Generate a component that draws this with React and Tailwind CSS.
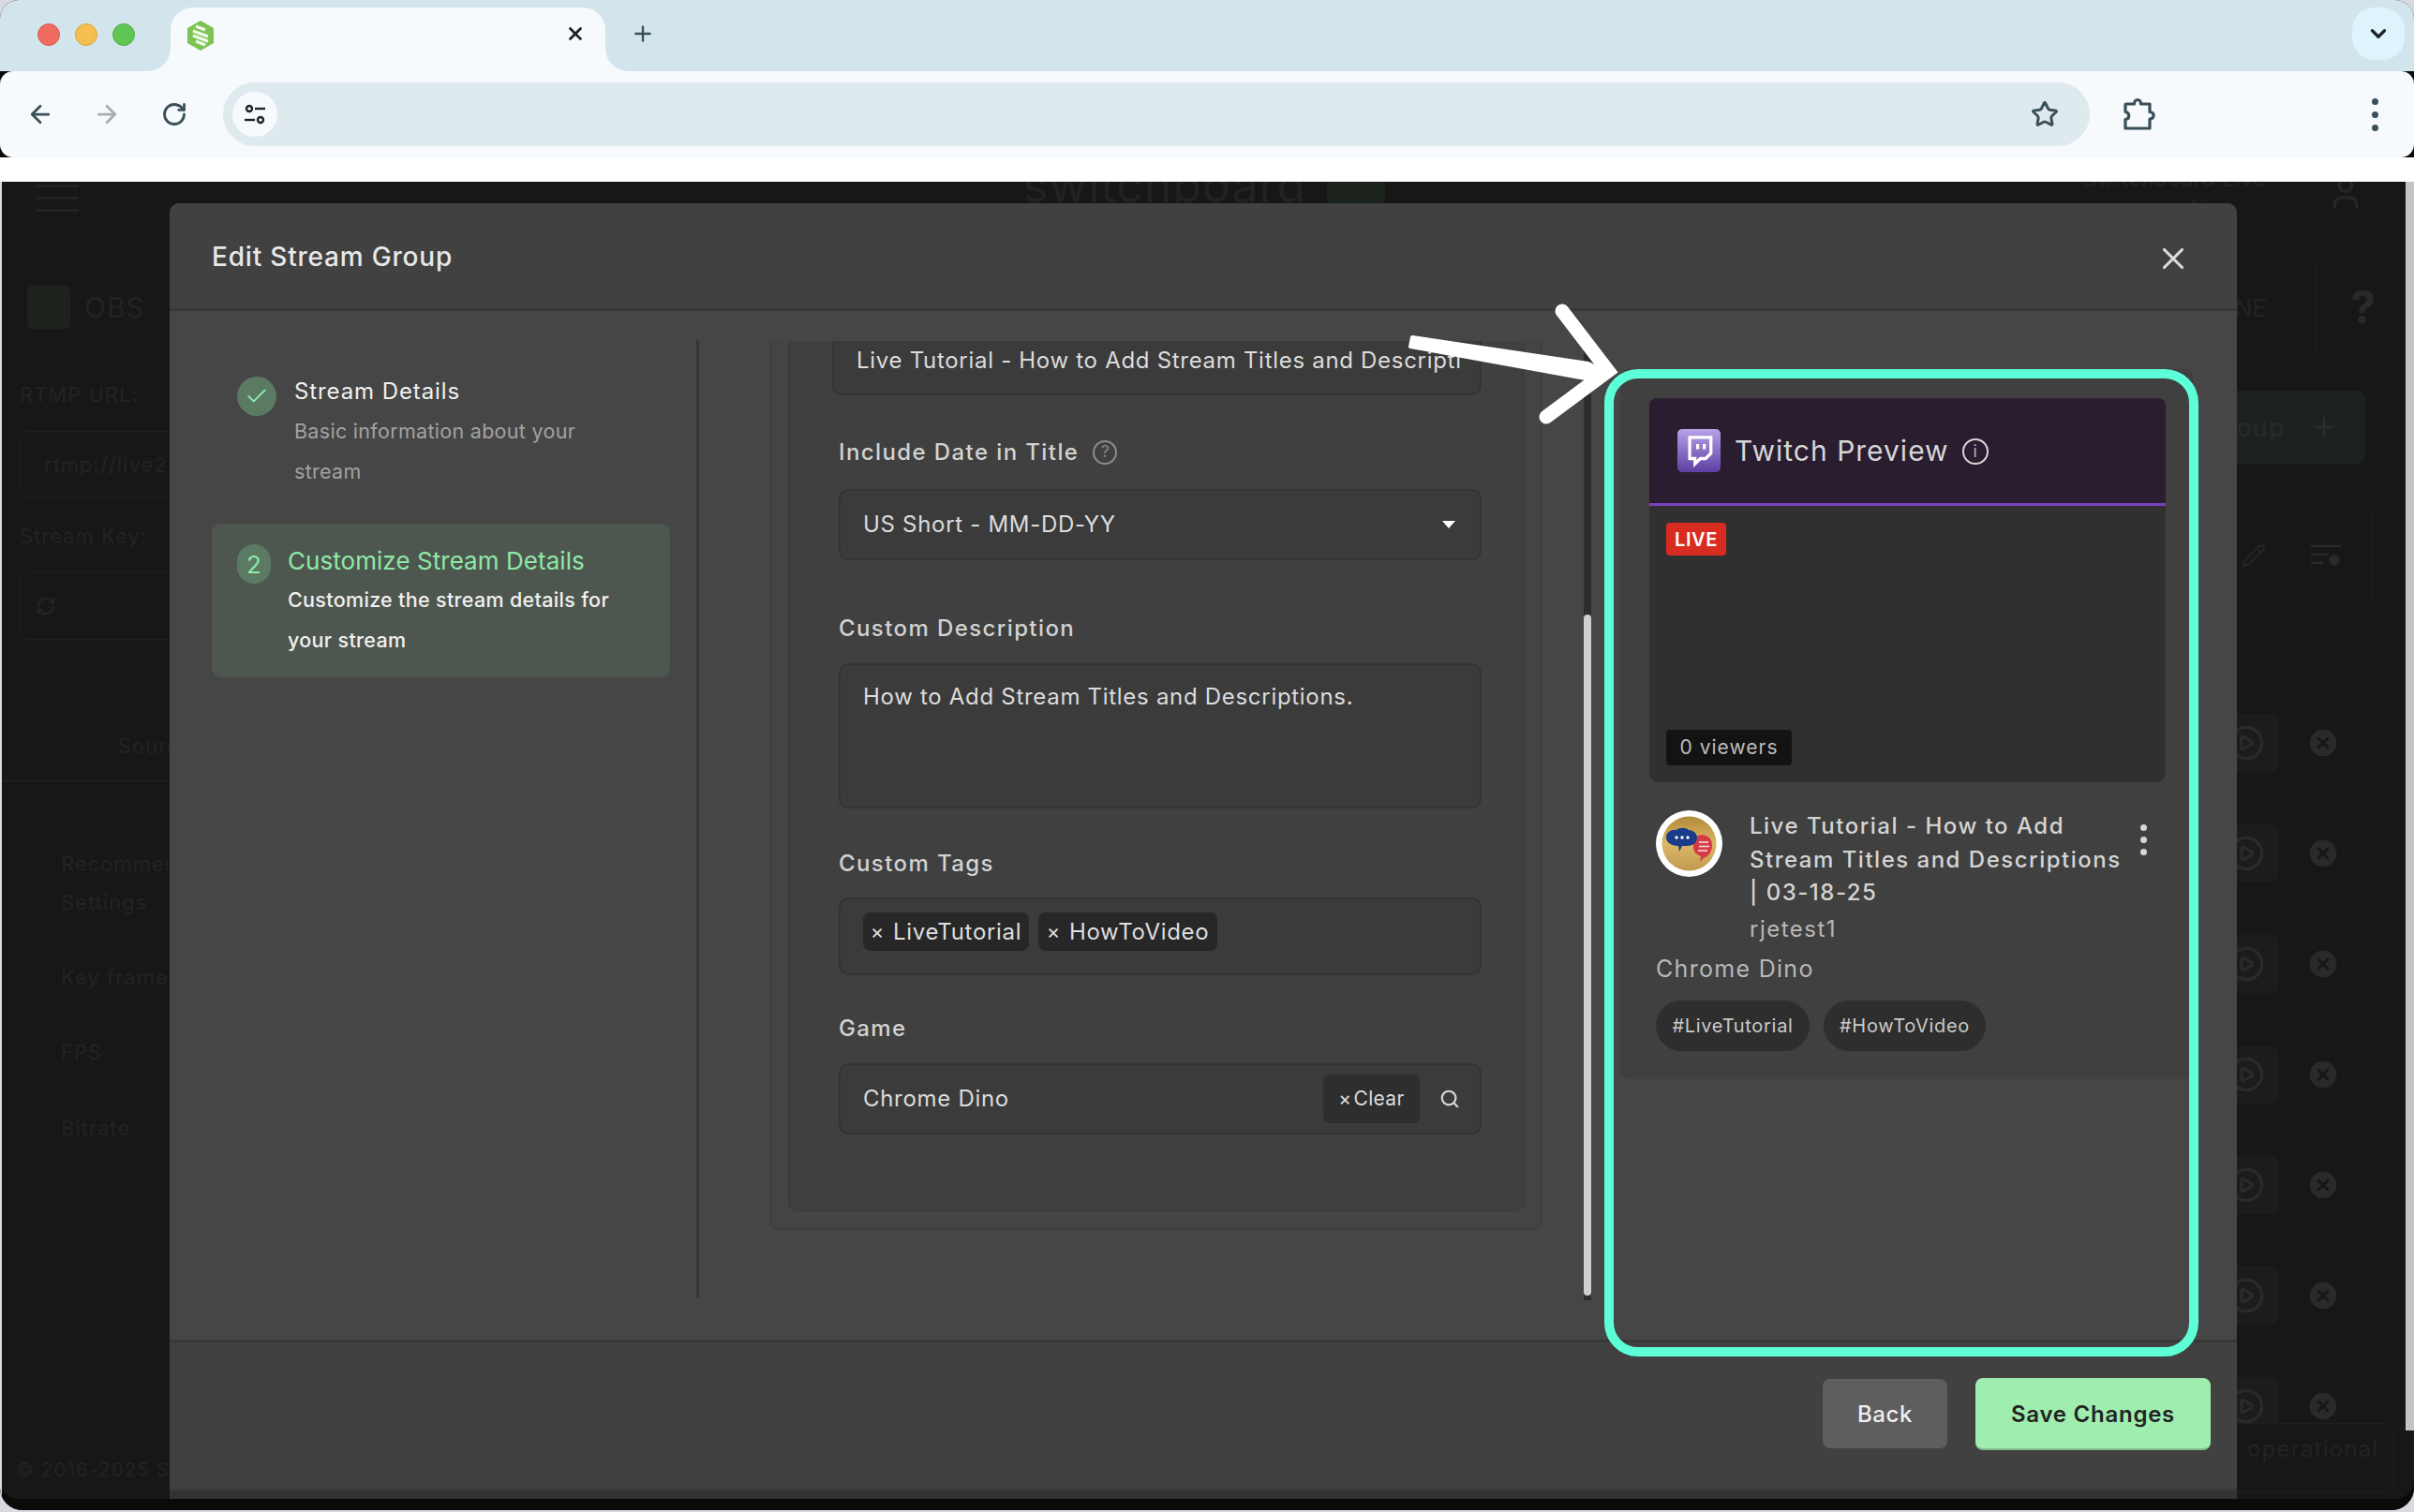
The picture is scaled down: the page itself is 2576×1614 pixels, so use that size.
import React from "react";
import { ArrowLeft, ArrowRight, RotateCw, Star, Plus, X, ChevronDown, Check, Search, RefreshCw, Pencil, CirclePlay, User, CircleX } from "lucide-react";

function Favicon() {
  return (
    <svg width="28" height="32" viewBox="0 0 28 32">
      <polygon points="14,0 28,8 28,24 14,32 0,24 0,8" fill="#7cc453" />
      <g stroke="#f4f9ee" strokeWidth="3.4" strokeLinecap="butt">
        <line x1="9" y1="6" x2="19" y2="10" />
        <line x1="6" y1="11" x2="22" y2="17" />
        <line x1="6" y1="16" x2="22" y2="22" />
        <line x1="9" y1="22" x2="19" y2="26" />
      </g>
    </svg>
  );
}

function TuneIcon() {
  return (
    <svg width="24" height="24" viewBox="0 0 24 24" fill="none" stroke="#1d2327" strokeWidth="2.4">
      <circle cx="6" cy="6" r="3" />
      <line x1="12" y1="6" x2="23" y2="6" />
      <line x1="1" y1="18" x2="12" y2="18" />
      <circle cx="18" cy="18" r="3" />
    </svg>
  );
}

function ExtensionIcon() {
  return (
    <svg width="34" height="36" viewBox="0 0 34 36" fill="none" stroke="#3b4f59" strokeWidth="3.2" strokeLinejoin="round">
      <path d="M4 7h7.5c0-6 7-6 7 0H28v8.5c5.5 0 5.500 7.500 0 7.500V33H2v-9.500c5-0.500 5-7.500 0-8V8c0-.6.600-1 2-1z" />
    </svg>
  );
}

function FilterGear() {
  return (
    <svg width="34" height="26" viewBox="0 0 34 26" fill="none" stroke="#2a2a2a" strokeWidth="2.4">
      <line x1="1" y1="3" x2="33" y2="3" />
      <line x1="1" y1="12" x2="20" y2="12" />
      <line x1="1" y1="21" x2="14" y2="21" />
      <circle cx="26" cy="18" r="4.500" fill="#2a2a2a" />
    </svg>
  );
}

function Kebab({ color, size = 6, gap = "gap-[8px]" }) {
  const cls = gap + " flex flex-col";
  return (
    <div className={cls}>
      {[0, 1, 2].map((i) => (
        <span key={i} className="block rounded-full" style={{ width: size, height: size, background: color }} />
      ))}
    </div>
  );
}

function BrowserChrome() {
  return (
    <>
      <div className="h-[76px] shrink-0 bg-[#d3e5ec] flex items-end relative">
        <div className="flex gap-[16px] pl-[40px] self-start pt-[25px]">
          <span className="w-[24px] h-[24px] rounded-full bg-[#ee6b60] border border-[#d85a50]" />
          <span className="w-[24px] h-[24px] rounded-full bg-[#f5bf4f] border border-[#dca53c]" />
          <span className="w-[24px] h-[24px] rounded-full bg-[#61c554] border border-[#4fae44]" />
        </div>
        <div className="relative ml-[38px] w-[464px] h-[68px] bg-[#f6fafd] rounded-t-[24px] flex items-center pl-[18px] pr-[21px] justify-between">
          <span className="absolute left-[-24px] bottom-0 w-[24px] h-[24px] bg-[radial-gradient(circle_at_0_0,#d3e5ec_23.5px,#f6fafd_24px)]" />
          <span className="absolute right-[-24px] bottom-0 w-[24px] h-[24px] bg-[radial-gradient(circle_at_100%_0,#d3e5ec_23.5px,#f6fafd_24px)]" />
          <div className="-mt-[8px]"><Favicon /></div>
          <X size={22} strokeWidth={3} color="#1d2327" className="-mt-[12px]" />
        </div>
        <Plus size={26} strokeWidth={2.2} color="#3b4f59" className="ml-[27px] mb-[27px]" />
        <div className="ml-auto mr-[10px] mb-[12px] w-[56px] h-[56px] rounded-[24px] bg-[#def4fc] flex items-center justify-center">
          <ChevronDown size={26} strokeWidth={3} color="#1d2327" />
        </div>
      </div>
      <div className="h-[92px] shrink-0 bg-[#f6fafd] rounded-[14px] flex items-center relative z-10">
        <ArrowLeft size={30} strokeWidth={2.2} color="#3b4f59" className="ml-[28px]" />
        <ArrowRight size={30} strokeWidth={2.2} color="#a7adb2" className="ml-[41px]" />
        <RotateCw size={28} strokeWidth={2.4} color="#3b4f59" className="ml-[43px]" />
        <div className="ml-[38px] w-[1992px] h-[68px] rounded-full bg-[#dfeaef] flex items-center pl-[10px] pr-[33px] justify-between">
          <div className="w-[48px] h-[48px] rounded-full bg-[#f6fafd] flex items-center justify-center"><TuneIcon /></div>
          <Star size={30} strokeWidth={2.4} color="#3b4f59" />
        </div>
        <div className="ml-[36px]"><ExtensionIcon /></div>
        <div className="ml-[231px]"><Kebab color="#3b4f59" size={7} gap="gap-[7px]" /></div>
      </div>
      <div className="h-[26px] shrink-0 bg-white" />
    </>
  );
}

function DimRow() {
  return (
    <div className="flex items-center h-[62px]">
      <div className="w-[55px] h-[62px] bg-[#1a1c1d] rounded-r-[8px] flex items-center">
        <CirclePlay size={40} strokeWidth={2} color="#2a2a2a" />
      </div>
      <CircleX size={38} fill="#2a2a2a" color="#171717" strokeWidth={2} className="ml-[28px]" />
    </div>
  );
}

const dimText = "text-[22px] leading-[30px] tracking-[1px]";

function DimBackground() {
  return (
    <div className="absolute inset-0 flex text-[#232323] overflow-hidden bg-[#171717] font-['Inter',sans-serif]">
      <div className="w-[700px] shrink-0 flex flex-col relative">
        <div className="flex flex-col gap-[10px] ml-[38px] mt-[3px] w-[46px]">
          <span className="h-[3px] bg-[#222]" /><span className="h-[3px] bg-[#222]" /><span className="h-[3px] bg-[#222]" />
        </div>
        <div className="flex items-center ml-[29px] mt-[79px] gap-[15px]">
          <span className="w-[46px] h-[46px] rounded-[6px] bg-[#1e221c]" />
          <span className="text-[30px] leading-[36px] tracking-[1px]">OBS</span>
        </div>
        <div className={"ml-[21px] mt-[55px] " + dimText}>RTMP URL:</div>
        <div className={"ml-[21px] mt-[24px] h-[71px] border border-[#1f1f1f] rounded-[8px] pl-[25px] flex items-center " + dimText}>rtmp://live2</div>
        <div className={"ml-[21px] mt-[26px] " + dimText}>Stream Key:</div>
        <div className="ml-[21px] mt-[24px] h-[72px] border border-[#1f1f1f] rounded-[8px] pl-[16px] flex items-center">
          <RefreshCw size={22} color="#262626" />
        </div>
        <div className={"ml-[126px] mt-[98px] " + dimText}>Source</div>
        <div className="mt-[22px] h-px bg-[#222]" />
        <div className="ml-[65px] mt-[68px] text-[22px] leading-[41px] tracking-[1px]">Recommended<br />Settings</div>
        <div className="ml-[65px] mt-[39px] text-[22px] leading-[41px] tracking-[1px]">Key frame</div>
        <div className="ml-[65px] mt-[39px] text-[22px] leading-[41px] tracking-[1px]">FPS</div>
        <div className="ml-[65px] mt-[40px] text-[22px] leading-[41px] tracking-[1px]">Bitrate</div>
        <div className="ml-[17px] mt-[330px] text-[20px] leading-[28px] tracking-[1.5px] whitespace-nowrap">© 2016-2025 Switchboard</div>
      </div>
      <div className="-mt-[16px] ml-[392px] flex items-center gap-[22px] text-[50px] leading-[52px] h-[40px] text-[#222] tracking-[1px]">
        <span>switchboard</span>
        <span className="w-[62px] h-[40px] bg-[#1c221c] rounded-[4px]" />
      </div>
      <div className="ml-auto w-[190px] shrink-0 flex flex-col items-start mr-[9px] relative">
        <div className="flex h-[60px] w-full justify-between pr-[44px] -mt-[18px]">
          <div className={"-ml-[154px] whitespace-nowrap " + dimText}>Switchboard Live<br /><span className="ml-[115px] leading-[26px]">Live</span></div>
          <User size={40} color="#262626" className="mt-[10px] shrink-0" />
        </div>
        <div className="flex items-center mt-[42px] w-full pl-[7px]">
          <span className="text-[26px]">NE</span>
          <span className="ml-[52px] w-px h-[100px] bg-[#1f1f1f]" />
          <span className="ml-[36px] text-[48px] font-bold text-[#2a2a2a]">?</span>
        </div>
        <div className="mt-[39px] w-[147px] h-[78px] bg-[#1c231e] rounded-r-[10px] flex items-center text-[26px] tracking-[1.5px] pl-[10px] text-[#2a2a2a]">
          oup<Plus size={32} color="#2c2c2c" className="ml-[26px]" />
        </div>
        <div className="mt-[50px] flex items-center pl-[15px]">
          <Pencil size={26} color="#262626" />
          <span className="ml-[47px]"><FilterGear /></span>
          <span className="ml-[31px] w-px h-[95px] bg-[#1f1f1f]" />
        </div>
        <div className="mt-[122px] flex flex-col gap-[56px]">
          {[0, 1, 2, 3, 4, 5, 6].map((i) => <DimRow key={i} />)}
        </div>
        <div className="-mt-[13px] w-[178px] h-[75px] border border-[#1f1f1f] rounded-[8px] bg-[#171717] pl-[20px] pt-[12px] text-[24px] leading-[30px] tracking-[1.2px] text-[#232323]">operational</div>
      </div>
    </div>
  );
}

function Label({ children, className }) {
  return (
    <div className={"h-[32px] flex items-center text-[24px] font-medium tracking-[1.4px] text-[#d2d2d2] " + className}>{children}</div>
  );
}

const box = "bg-[#3b3b3b] border-2 border-[#343434] rounded-[10px] ";
const val = "text-[24px] tracking-[0.7px] text-[#dcdcdc] ";

function MiddleColumn() {
  return (
    <div className="relative ml-[75px] w-[878px] h-[1024px] mt-[32px] overflow-hidden shrink-0">
      <div className="w-[825px] -mt-[18px] h-[967px] border-2 border-t-0 border-[#3f3f3f] rounded-[10px] bg-[#444] pl-[18px]">
        <div className="w-[786px] h-[947px] rounded-[10px] bg-[#404040] border-2 border-t-0 border-[#3c3c3c] pl-[52px] pr-[44px]">
          <div className={box + "h-[76px] -ml-[7px] flex items-center pl-[24px] pr-[21px] overflow-hidden whitespace-nowrap " + val}>
            <span className="block overflow-hidden w-full mt-[2px]">Live Tutorial - How to Add Stream Titles and Descriptions</span>
          </div>
          <Label className="mt-[45px] mb-[23px] gap-[15px]">
            Include Date in Title
            <span className="w-[26px] h-[26px] rounded-full border-2 border-[#8c8c8c] text-[#8c8c8c] text-[17px] font-normal flex items-center justify-center tracking-normal">?</span>
          </Label>
          <div className={box + "h-[76px] flex items-center justify-between pl-[24px] pr-[26px] " + val}>
            <span className="-mt-[1px]">US Short - MM-DD-YY</span>
            <span className="w-0 h-0 border-x-[7px] border-x-transparent border-t-[8px] border-t-white" />
          </div>
          <Label className="mt-[57px] mb-[21px]">Custom Description</Label>
          <div className={box + "h-[155px] pl-[24px] pt-[18px] leading-[32px] " + val}>How to Add Stream Titles and Descriptions.</div>
          <Label className="mt-[43px] mb-[20px]">Custom Tags</Label>
          <div className={box + "h-[83px] pl-[24px] pt-[14px] flex gap-[10px] items-start"}>
            <span className="h-[41px] w-[177px] bg-[#272727] rounded-[8px] flex items-center justify-center gap-[9px] text-[24px] tracking-[0.7px] text-[#dedede]"><span className="text-[22px]">×</span>LiveTutorial</span>
            <span className="h-[41px] w-[191px] bg-[#272727] rounded-[8px] flex items-center justify-center gap-[9px] text-[24px] tracking-[0.7px] text-[#dedede]"><span className="text-[22px]">×</span>HowToVideo</span>
          </div>
          <Label className="mt-[41px] mb-[21px]">Game</Label>
          <div className={box + "h-[76px] flex items-center pl-[24px] pr-[21px] " + val}>
            <span>Chrome Dino</span>
            <span className="ml-auto w-[103px] h-[52px] rounded-[6px] bg-[#2e2e2e] flex items-center justify-center text-[21px] tracking-[0.3px] gap-[2px]"><span>×</span>Clear</span>
            <Search size={22} strokeWidth={2.4} color="#d6d6d6" className="ml-[21px]" />
          </div>
        </div>
      </div>
      <div className="absolute left-[869px] top-0 w-[8px] h-full bg-[#2c2c2c]" />
      <div className="absolute left-[869px] top-[292px] w-[8px] h-[727px] bg-[#cfcfcf] rounded-full" />
    </div>
  );
}

function Avatar() {
  return (
    <svg width="71" height="71" viewBox="0 0 71 71" className="shrink-0">
      <defs>
        <linearGradient id="gold" x1="0" y1="0" x2="0" y2="1">
          <stop offset="0" stopColor="#b18a3a" />
          <stop offset=".5" stopColor="#dcb766" />
          <stop offset="1" stopColor="#c09a52" />
        </linearGradient>
      </defs>
      <circle cx="35.500" cy="35.500" r="35.500" fill="#fff" />
      <circle cx="35.500" cy="35.500" r="29" fill="url(#gold)" />
      <path d="M43 28c7-4 17-1 17 9 0 6-3 12-9 14l-4 4 1-6c-5-2-8-5-8-10 0-4 1-9 3-11z" fill="#d53a46" />
      <g stroke="#f4dcd8" strokeWidth="1.600"><line x1="46" y1="34" x2="56" y2="34" /><line x1="46" y1="38.500" x2="57" y2="38.500" /><line x1="45" y1="43" x2="55" y2="43" /></g>
      <path d="M11 29c0-6 6-9 11-8 3-3 10-3 13 0 4 0 9 3 9 8 0 6-5 9-11 9h-5l-3 6-1-6c-6 0-13-3-13-9z" fill="#1a3c8b" />
      <g fill="#fff"><circle cx="22" cy="29" r="1.700" /><circle cx="28" cy="29" r="1.700" /><circle cx="34" cy="29" r="1.700" /></g>
    </svg>
  );
}

function PreviewColumn() {
  return (
    <div className="ml-[30px] mt-[62px] w-[612px] h-[758px] rounded-[10px] bg-[#404040] shrink-0 pt-[31px] pl-[31px]">
      <div className="w-[551px] h-[115px] bg-[#2a1d30] rounded-t-[8px] border-b-[3px] border-[#7a40c2] flex items-center pl-[30px]">
        <div className="w-[46px] h-[46px] rounded-[5px] bg-gradient-to-b from-[#b9a3e8] to-[#5e3fa2] flex items-center justify-center">
          <svg width="34" height="36" viewBox="0 0 24 24" fill="none" stroke="#fff" strokeWidth="2.300" strokeLinejoin="miter"><path d="M21 2H5v16h4v4l4-4h4l4-4z" /><path d="M11 11V7M16 11V7" /></svg>
        </div>
        <span className="ml-[15px] text-[30px] leading-[44px] tracking-[1px] text-[#d6d6d6]">Twitch Preview</span>
        <span className="ml-[14px] w-[28px] h-[28px] rounded-full border-2 border-[#d6d6d6] flex items-center justify-center text-[#d6d6d6] text-[18px] leading-none mt-[2px] font-light">i</span>
      </div>
      <div className="w-[551px] h-[295px] bg-[#303030] rounded-b-[10px] pl-[18px] pt-[18px] flex flex-col justify-between pb-[18px]">
        <span className="w-[64px] h-[35px] bg-[#d92c20] rounded-[4px] text-white text-[20px] font-semibold tracking-[0.6px] flex items-center justify-center">LIVE</span>
        <span className="w-[134px] h-[38px] bg-[#131313] rounded-[4px] text-[#bdbdbd] text-[21px] tracking-[1px] flex items-center justify-center">0 viewers</span>
      </div>
      <div className="pl-[7px]">
        <div className="flex mt-[30px]">
          <Avatar />
          <div className="ml-[29px] w-[400px] text-[24px] leading-[35.5px] tracking-[1.5px] font-medium text-[#d4d4d4] -mt-[1px]">
            Live Tutorial - How to Add Stream Titles and Descriptions | 03-18-25
            <div className="font-normal text-[#b8b8b8] mt-[3px]">rjetest1</div>
          </div>
          <div className="ml-[17px] mt-[15px]"><Kebab color="#d6d6d6" size={7} gap="gap-[6px]" /></div>
        </div>
        <div className="mt-[8px] h-[36px] flex items-center text-[25px] tracking-[1.3px] text-[#b8b8b8]">Chrome Dino</div>
        <div className="flex mt-[15px] gap-[15px]">
          <span className="h-[54px] w-[164px] rounded-full bg-[#2e2e2e] flex items-center justify-center text-[20px] tracking-[0.7px] text-[#c9c9c9]">#LiveTutorial</span>
          <span className="h-[54px] w-[173px] rounded-full bg-[#2e2e2e] flex items-center justify-center text-[20px] tracking-[0.7px] text-[#c9c9c9]">#HowToVideo</span>
        </div>
      </div>
    </div>
  );
}

function Modal() {
  return (
    <div className="absolute left-[181px] top-[23px] w-[2206px] h-[1383px] rounded-t-[10px] bg-[#464646] flex flex-col overflow-hidden font-['Inter',sans-serif]">
      <div className="h-[115px] shrink-0 bg-[#414141] border-b-[3px] border-[#383838] flex items-center justify-between pl-[45px] pr-[49px]">
        <span className="text-[28px] font-medium tracking-[0.8px] text-[#e8e8e8] mt-[2px]">Edit Stream Group</span>
        <X size={38} strokeWidth={2} color="#dcdcdc" className="mt-[6px]" />
      </div>
      <div className="flex-1 flex min-h-0 bg-[#464646] items-start">
        <div className="ml-[45px] w-[520px] h-[1022px] mt-[31px] border-r-[3px] border-[#363636] shrink-0 pt-[41px]">
          <div className="flex pl-[27px] h-[126px]">
            <span className="w-[42px] h-[42px] rounded-full bg-[#5b7a64] flex items-center justify-center -mt-[2px]">
              <Check size={26} strokeWidth={1.800} color="#8fe8a8" />
            </span>
            <div className="ml-[19px] -mt-[4px]">
              <div className="text-[24px] leading-[36px] tracking-[0.9px] text-[#f0f0f0]">Stream Details</div>
              <div className="text-[21.500px] leading-[43px] tracking-[0.3px] text-[#a2a2a2] mt-[3px]">Basic information about your<br />stream</div>
            </div>
          </div>
          <div className="mt-[29px] w-[489px] h-[164px] rounded-[10px] bg-[#4e574f] flex pl-[27px] pt-[22px]">
            <span className="w-[36px] h-[42px] rounded-full bg-[#5b7a64] flex items-center justify-center text-[#8fe8a8] text-[26px] shrink-0">2</span>
            <div className="ml-[18px]">
              <div className="text-[26px] leading-[36px] tracking-[0.05px] text-[#8fe8a8]">Customize Stream Details</div>
              <div className="text-[21.500px] leading-[43px] tracking-[0.32px] text-[#f0f0f0] font-medium mt-[2px]">Customize the stream details for<br />your stream</div>
            </div>
          </div>
        </div>
        <MiddleColumn />
        <PreviewColumn />
      </div>
      <div className="h-[170px] shrink-0 bg-[#414141] border-t-[3px] border-[#383838] flex justify-end pr-[28px] pt-[38px] gap-[30px] relative">
        <button className="w-[133px] h-[74px] pt-[2px] rounded-[8px] bg-[#5e5e5e] text-[#f0f0f0] text-[24px] tracking-[0.6px] font-medium mt-[1px]">Back</button>
        <button className="w-[251px] h-[77px] pt-[2px] rounded-[8px] bg-[#9feeb0] border-b-2 border-[#7fbf90] text-[#232323] text-[24px] tracking-[0.75px] font-semibold">Save Changes</button>
        <div className="absolute inset-x-0 bottom-0 h-[11px] bg-[#333] border-t-2 border-[#3a3a3a]" />
      </div>
    </div>
  );
}

function Annotation() {
  return (
    <>
      <div className="absolute left-[1712px] top-[200px] w-[634px] h-[1054px] border-[10px] border-[#5cffd8] rounded-[36px]" />
      <svg className="absolute left-0 top-0 pointer-events-none" width="2576" height="1420" viewBox="0 194 2576 1420" fill="none">
        <path d="M1507 360 L1695 388 L1714 398 L1692 404 L1505 370 Z" fill="#fff" stroke="#fff" strokeWidth="4" strokeLinejoin="round" />
        <path d="M1667 332 L1716 396 L1650 445" stroke="#fff" strokeWidth="15" strokeLinecap="round" strokeLinejoin="miter" />
      </svg>
    </>
  );
}

export default function App() {
  return (
    <div className="w-[2576px] h-[1614px] bg-[#d9d9e2] overflow-hidden font-['Inter',sans-serif]">
      <div className="w-[2576px] h-[1612px] rounded-[24px] rounded-t-[20px] overflow-hidden flex flex-col bg-[#0a0a0a]">
        <BrowserChrome />
        <div className="relative flex-1 bg-[#0a0a0a]">
          <div className="absolute inset-x-0 top-0 bottom-[12px] rounded-b-[20px] overflow-hidden">
            <DimBackground />
          </div>
          <div className="absolute left-0 top-0 bottom-0 w-[2px] bg-[#d9d9e2]" />
          <div className="absolute right-0 top-0 w-[9px] h-[1333px] bg-[#c4c4c4]" />
          <Modal />
          <Annotation />
        </div>
      </div>
    </div>
  );
}
